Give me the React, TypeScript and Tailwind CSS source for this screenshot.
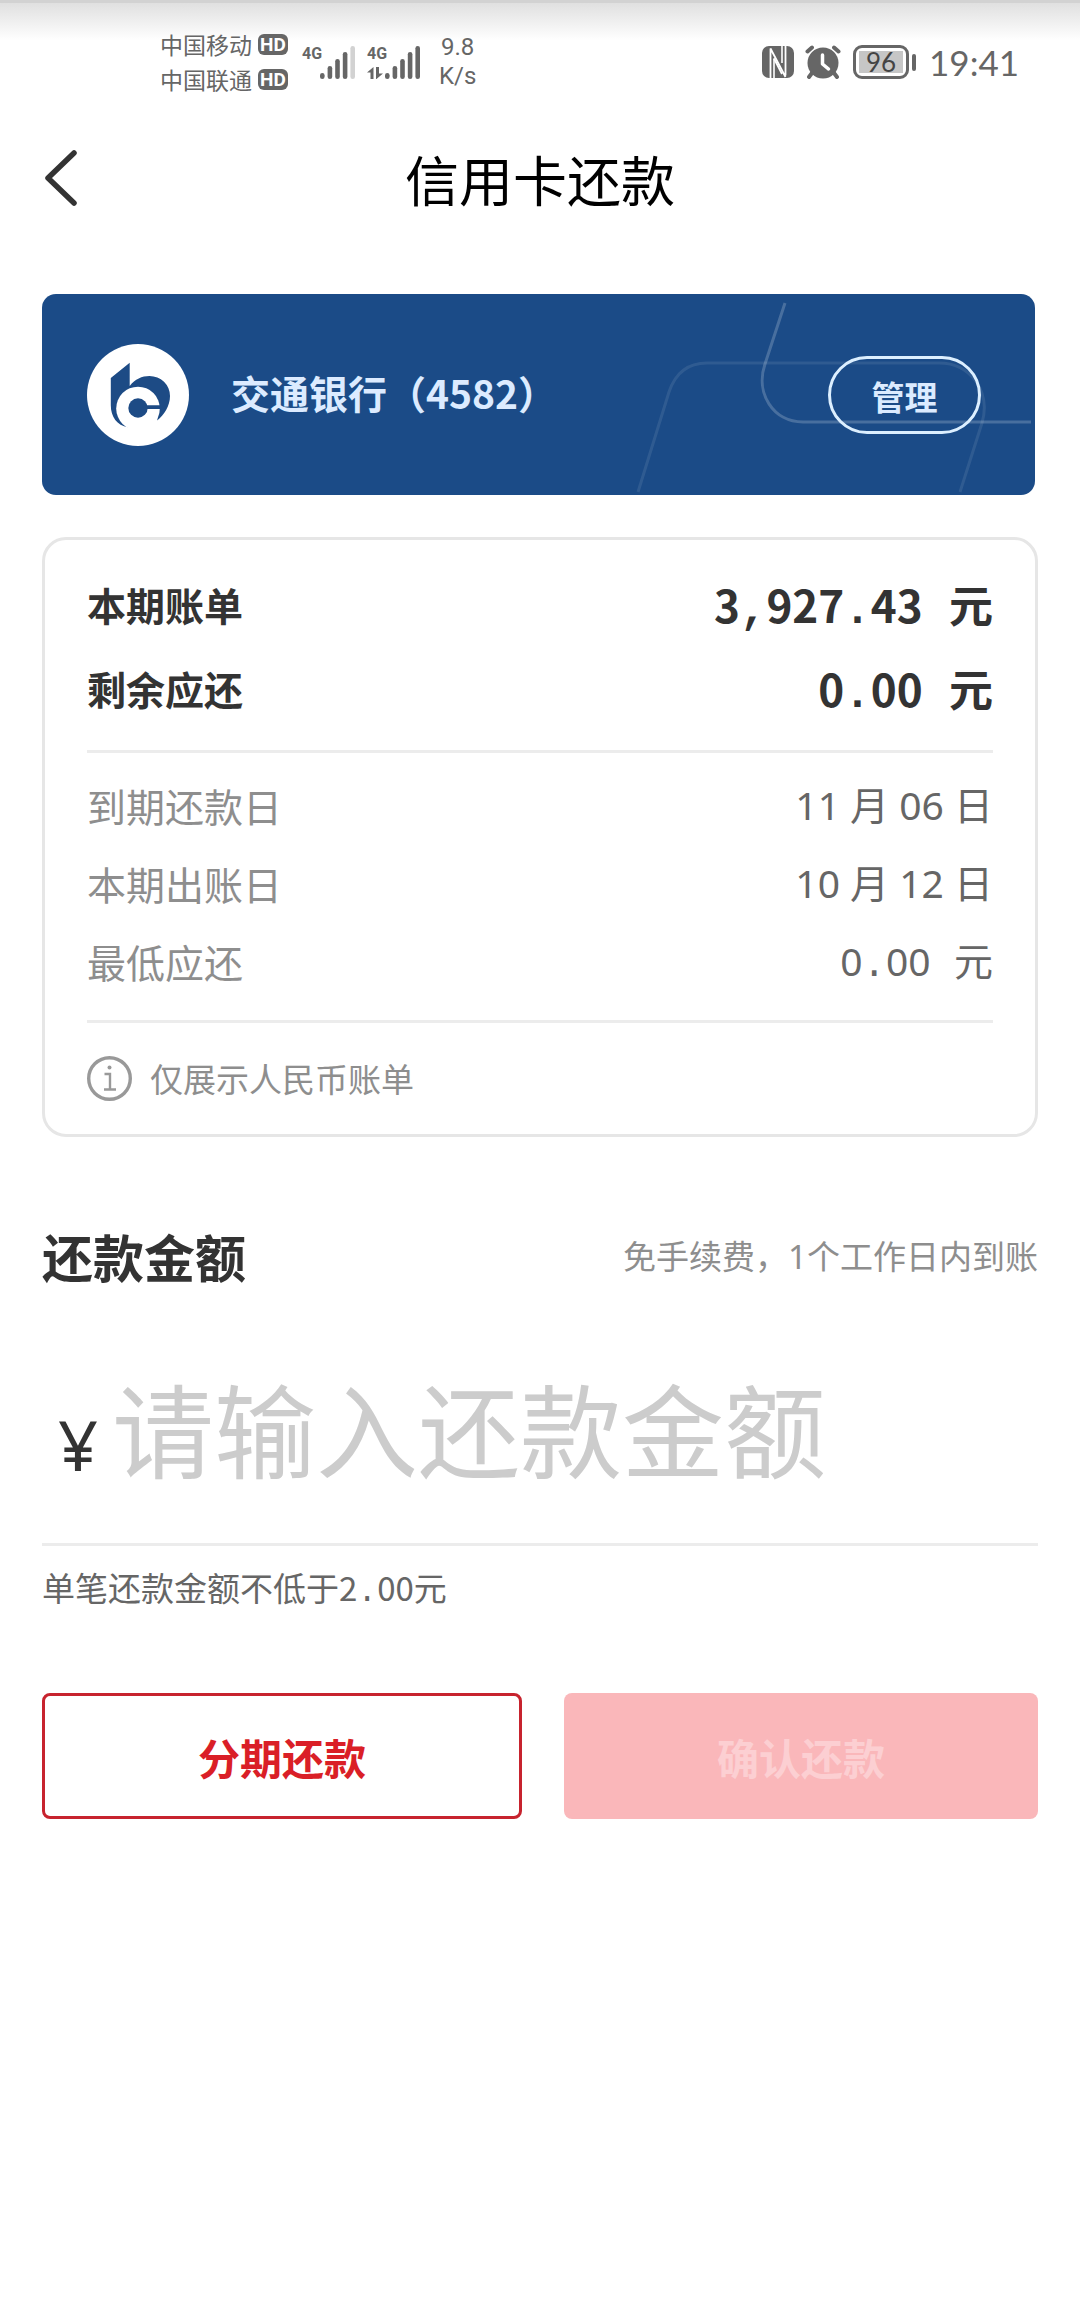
import type { ReactNode } from "react";

type RowProps = {
  label: string;
  children: ReactNode;
  /** Heavy rows carry the bill totals, light rows the dates and minimum. */
  strong?: boolean;
};

function Amount({ value }: { value: string }) {
  return (
    <>
      {value.split(/([.,\s])/).map((part, i) =>
        /^[.,\s]$/.test(part) ? (
          <span key={i} className="font-['Liberation_Mono',monospace] leading-none whitespace-pre">
            {part}
          </span>
        ) : (
          part
        ),
      )}
    </>
  );
}

function Row({ label, children, strong = false }: RowProps) {
  return (
    <div
      className={
        strong
          ? "flex h-[84px] items-center justify-between font-bold text-[#333]"
          : "flex h-[78px] items-center justify-between text-[#666]"
      }
    >
      <dt className={strong ? "text-[39px]" : "text-[39px] text-[#8e8e8e]"}>{label}</dt>
      <dd
        className={
          strong ? "text-[44px]" : "font-['Noto_Sans','Noto_Sans_CJK_SC',sans-serif] text-[39px]"
        }
      >
        {children}
      </dd>
    </div>
  );
}

function Carrier({ name }: { name: string }) {
  return (
    <div className="flex h-[35px] items-center gap-[6px]">
      <span className="text-[23px] leading-[35px]">{name}</span>
      <span className="flex h-[21px] w-[30px] items-center justify-center rounded-[6px] bg-[#666] font-['Roboto',sans-serif] text-[19px] leading-none font-bold text-white">
        HD
      </span>
    </div>
  );
}

function Signal({ active, data = false }: { active: number; data?: boolean }) {
  const bars = [6, 13, 20, 27, 33];
  return (
    <div className="flex h-[34px] items-end">
      <div className="flex h-[34px] w-[18px] flex-col justify-between">
        <span className="font-['Roboto',sans-serif] text-[16px] leading-[18px] font-bold">4G</span>
        {data && (
          <svg viewBox="0 0 16 12" className="h-[12px] w-[16px] fill-[#666]" aria-hidden="true">
            <path d="M0 5.500 6.500 0v12H3.500V5.500zM9 0h3v6.500h4L9.500 12H9z" />
          </svg>
        )}
      </div>
      <svg viewBox="0 0 36 34" className="h-[34px] w-[36px]" aria-hidden="true">
        {bars.map((h, i) => (
          <rect
            key={h}
            x={i * 7.6}
            y={34 - h}
            width="4.6"
            height={h}
            rx="2.3"
            fill={i < active ? "#666" : "#d2d2d2"}
          />
        ))}
      </svg>
    </div>
  );
}

function StatusBar() {
  return (
    <div className="flex h-[110px] items-start justify-between border-t-[3px] border-[#d2d2d2] bg-linear-to-b from-[#e0e0e0] to-white to-35% pr-[61px] pl-[160px] text-[#666]">
      <div className="flex items-center pt-[24px]">
        <div className="flex flex-col">
          <Carrier name="中国移动" />
          <Carrier name="中国联通" />
        </div>
        <div className="ml-[14px] flex gap-[11px]">
          <Signal active={4} />
          <Signal active={5} data />
        </div>
        <div className="ml-[18px] flex flex-col text-center font-['Roboto',sans-serif] text-[24px] leading-[29px]">
          <span>9.8</span>
          <span>K/s</span>
        </div>
      </div>
      <div className="flex h-[118px] items-center">
        <svg viewBox="0 0 32 32" className="h-[32px] w-[32px]" aria-hidden="true">
          <rect width="32" height="32" rx="7" fill="#666" />
          <path
            d="M8.500 32V2.500L23.500 31M8.500 2.500 M23.500 0v29.500"
            fill="none"
            stroke="#fff"
            strokeWidth="1.800"
          />
          <path d="M12 12.500 20 28" stroke="#fff" strokeWidth="1.800" />
          <path d="M12 12.500V32M20 0v17" stroke="#fff" strokeWidth="1.600" />
        </svg>
        <svg viewBox="0 0 36 34" className="ml-[11px] h-[34px] w-[36px]" aria-hidden="true">
          <circle cx="18" cy="18" r="15.500" fill="#666" />
          <path d="M2.500 6.500 7 2.500M33.500 6.500 29 2.500M7 28l-3 4M29 28l3 4" stroke="#666" strokeWidth="4" strokeLinecap="round" />
          <path d="M17.500 10v9l6 5" fill="none" stroke="#fff" strokeWidth="3.500" strokeLinecap="round" strokeLinejoin="round" />
        </svg>
        <div className="ml-[12px] flex h-[34px] w-[56px] items-center justify-center rounded-[9px] border-[3px] border-[#666] p-[3px]">
          <span className="flex h-[22px] w-full items-center justify-center bg-[#c6c6c6] font-['Lato',sans-serif] text-[26px] leading-none text-[#444]">
            96
          </span>
        </div>
        <span className="ml-[3px] h-[17px] w-[4px] rounded-full bg-[#666]" />
        <span className="ml-[13px] font-['Lato',sans-serif] text-[35px] leading-none">19:41</span>
      </div>
    </div>
  );
}

function BankLogo() {
  return (
    <svg viewBox="0 0 102 102" className="h-[102px] w-[102px] shrink-0" aria-hidden="true">
      <circle cx="51" cy="51" r="51" fill="#fff" />
      <path
        d="M23.800 34 42.700 18.700V42C48 35 55 32 62.500 32A20.500 20 0 0 1 83 52C83 62 77 71 70.200 76.500L72 66 51 64 41 83.200C30 81.500 23.800 73 23.800 61.300z"
        fill="#1d4b85"
      />
      <circle cx="51" cy="64.500" r="21.800" fill="#fff" />
      <circle cx="51" cy="64" r="9.700" fill="#1d4b85" />
      <path d="M58 61.300h16v3.700H58z" fill="#1d4b85" />
    </svg>
  );
}

function BankCard() {
  return (
    <section className="relative mr-[3px] flex h-[201px] items-center overflow-hidden rounded-[14px] bg-[#1b4b87] pr-[54px] pl-[45px]">
      <svg
        viewBox="0 0 404 200"
        className="absolute top-0 right-0 h-[200px] w-[404px]"
        fill="none"
        stroke="#fff"
        aria-hidden="true"
      >
        <path d="M154 9 134 70C124 99 142 128 172 128H400" strokeOpacity="0.200" strokeWidth="3" />
        <path
          d="M7 198 38 98C44 80 56 69 76 69H308C340 69 360 98 351 129L329 198"
          strokeOpacity="0.090"
          strokeWidth="3"
        />
      </svg>
      <BankLogo />
      <h2 className="ml-[42px] flex-1 pb-1 text-[39px] font-bold text-[#dcebff]">交通银行（4582）</h2>
      <button
        type="button"
        className="relative h-[78px] w-[153px] rounded-full border-[3px] border-[#dcefff] pt-1 text-[33px] font-bold text-[#dcebff]"
      >
        管理
      </button>
    </section>
  );
}

export default function App() {
  return (
    <div className="min-h-screen bg-white font-['Noto_Sans_CJK_SC',sans-serif] text-[#333]">
      <StatusBar />
      <header className="grid h-[136px] grid-cols-[1fr_auto_1fr] items-center px-[42px]">
        <button type="button" aria-label="返回" className="h-[60px] w-[60px]">
          <svg viewBox="0 0 60 60" className="h-[60px] w-[60px]" aria-hidden="true">
            <path
              d="M32 5 6 30l26 25"
              fill="none"
              stroke="#333"
              strokeWidth="5.500"
              strokeLinecap="round"
              strokeLinejoin="round"
            />
          </svg>
        </button>
        <h1 className="text-[54px] text-black">信用卡还款</h1>
      </header>

      <main className="px-[42px] pt-[48px]">
        <BankCard />

        <section className="mt-[42px] rounded-[24px] border-[3px] border-[#e6e6e6] px-[42px]">
          <dl className="border-b-[3px] border-[#ececec] pt-[22px] pb-[20px]">
            <Row label="本期账单" strong>
              <Amount value="3,927.43 元" />
            </Row>
            <Row label="剩余应还" strong>
              <Amount value="0.00 元" />
            </Row>
          </dl>
          <dl className="border-b-[3px] border-[#ececec] pt-[13px] pb-[20px]">
            <Row label="到期还款日">11 月 06 日</Row>
            <Row label="本期出账日">10 月 12 日</Row>
            <Row label="最低应还">
              <Amount value="0.00 元" />
            </Row>
          </dl>
          <p className="flex h-[111px] items-center gap-[18px] text-[33px] text-[#8e8e8e]">
            <svg viewBox="0 0 45 45" className="h-[45px] w-[45px]" fill="none" stroke="#999" aria-hidden="true">
              <circle cx="22.500" cy="22.500" r="20.800" strokeWidth="3.400" />
              <path d="M17.500 18h5.500v15M17 33.500h12" strokeWidth="2.400" />
              <circle cx="22.500" cy="11.500" r="2" fill="#999" stroke="none" />
            </svg>
            仅展示人民币账单
          </p>
        </section>

        <section className="mt-[82px]">
          <div className="flex h-[75px] items-center justify-between">
            <label htmlFor="amount" className="text-[51px] font-bold">
              还款金额
            </label>
            <span className="font-['Noto_Sans','Noto_Sans_CJK_SC',sans-serif] text-[33px] text-[#8e8e8e]">
              免手续费，1个工作日内到账
            </span>
          </div>
          <div className="flex items-baseline gap-[14px] border-b-[3px] border-[#ececec] pt-[57px] pb-[42px] pl-4">
            <span className="font-['Noto_Sans',sans-serif] text-[70px] leading-none">¥</span>
            <input
              id="amount"
              type="text"
              inputMode="decimal"
              placeholder="请输入还款金额"
              className="h-[150px] min-w-0 flex-1 text-[102px] outline-none placeholder:text-[#ccc]"
            />
          </div>
          <p className="mt-[20px] text-[33px] leading-[42px] text-[#666]">
            <Amount value="单笔还款金额不低于2.00元" />
          </p>
        </section>

        <div className="mt-[84px] grid grid-cols-[80fr_79fr] gap-[42px] text-[42px] font-bold">
          <button
            type="button"
            className="h-[126px] rounded-[8px] border-[3px] border-[#c7232e] text-[#da1f27]"
          >
            分期还款
          </button>
          <button type="button" disabled className="h-[126px] rounded-[8px] bg-[#fab7ba] text-[#fccfd2]">
            确认还款
          </button>
        </div>
      </main>
    </div>
  );
}
